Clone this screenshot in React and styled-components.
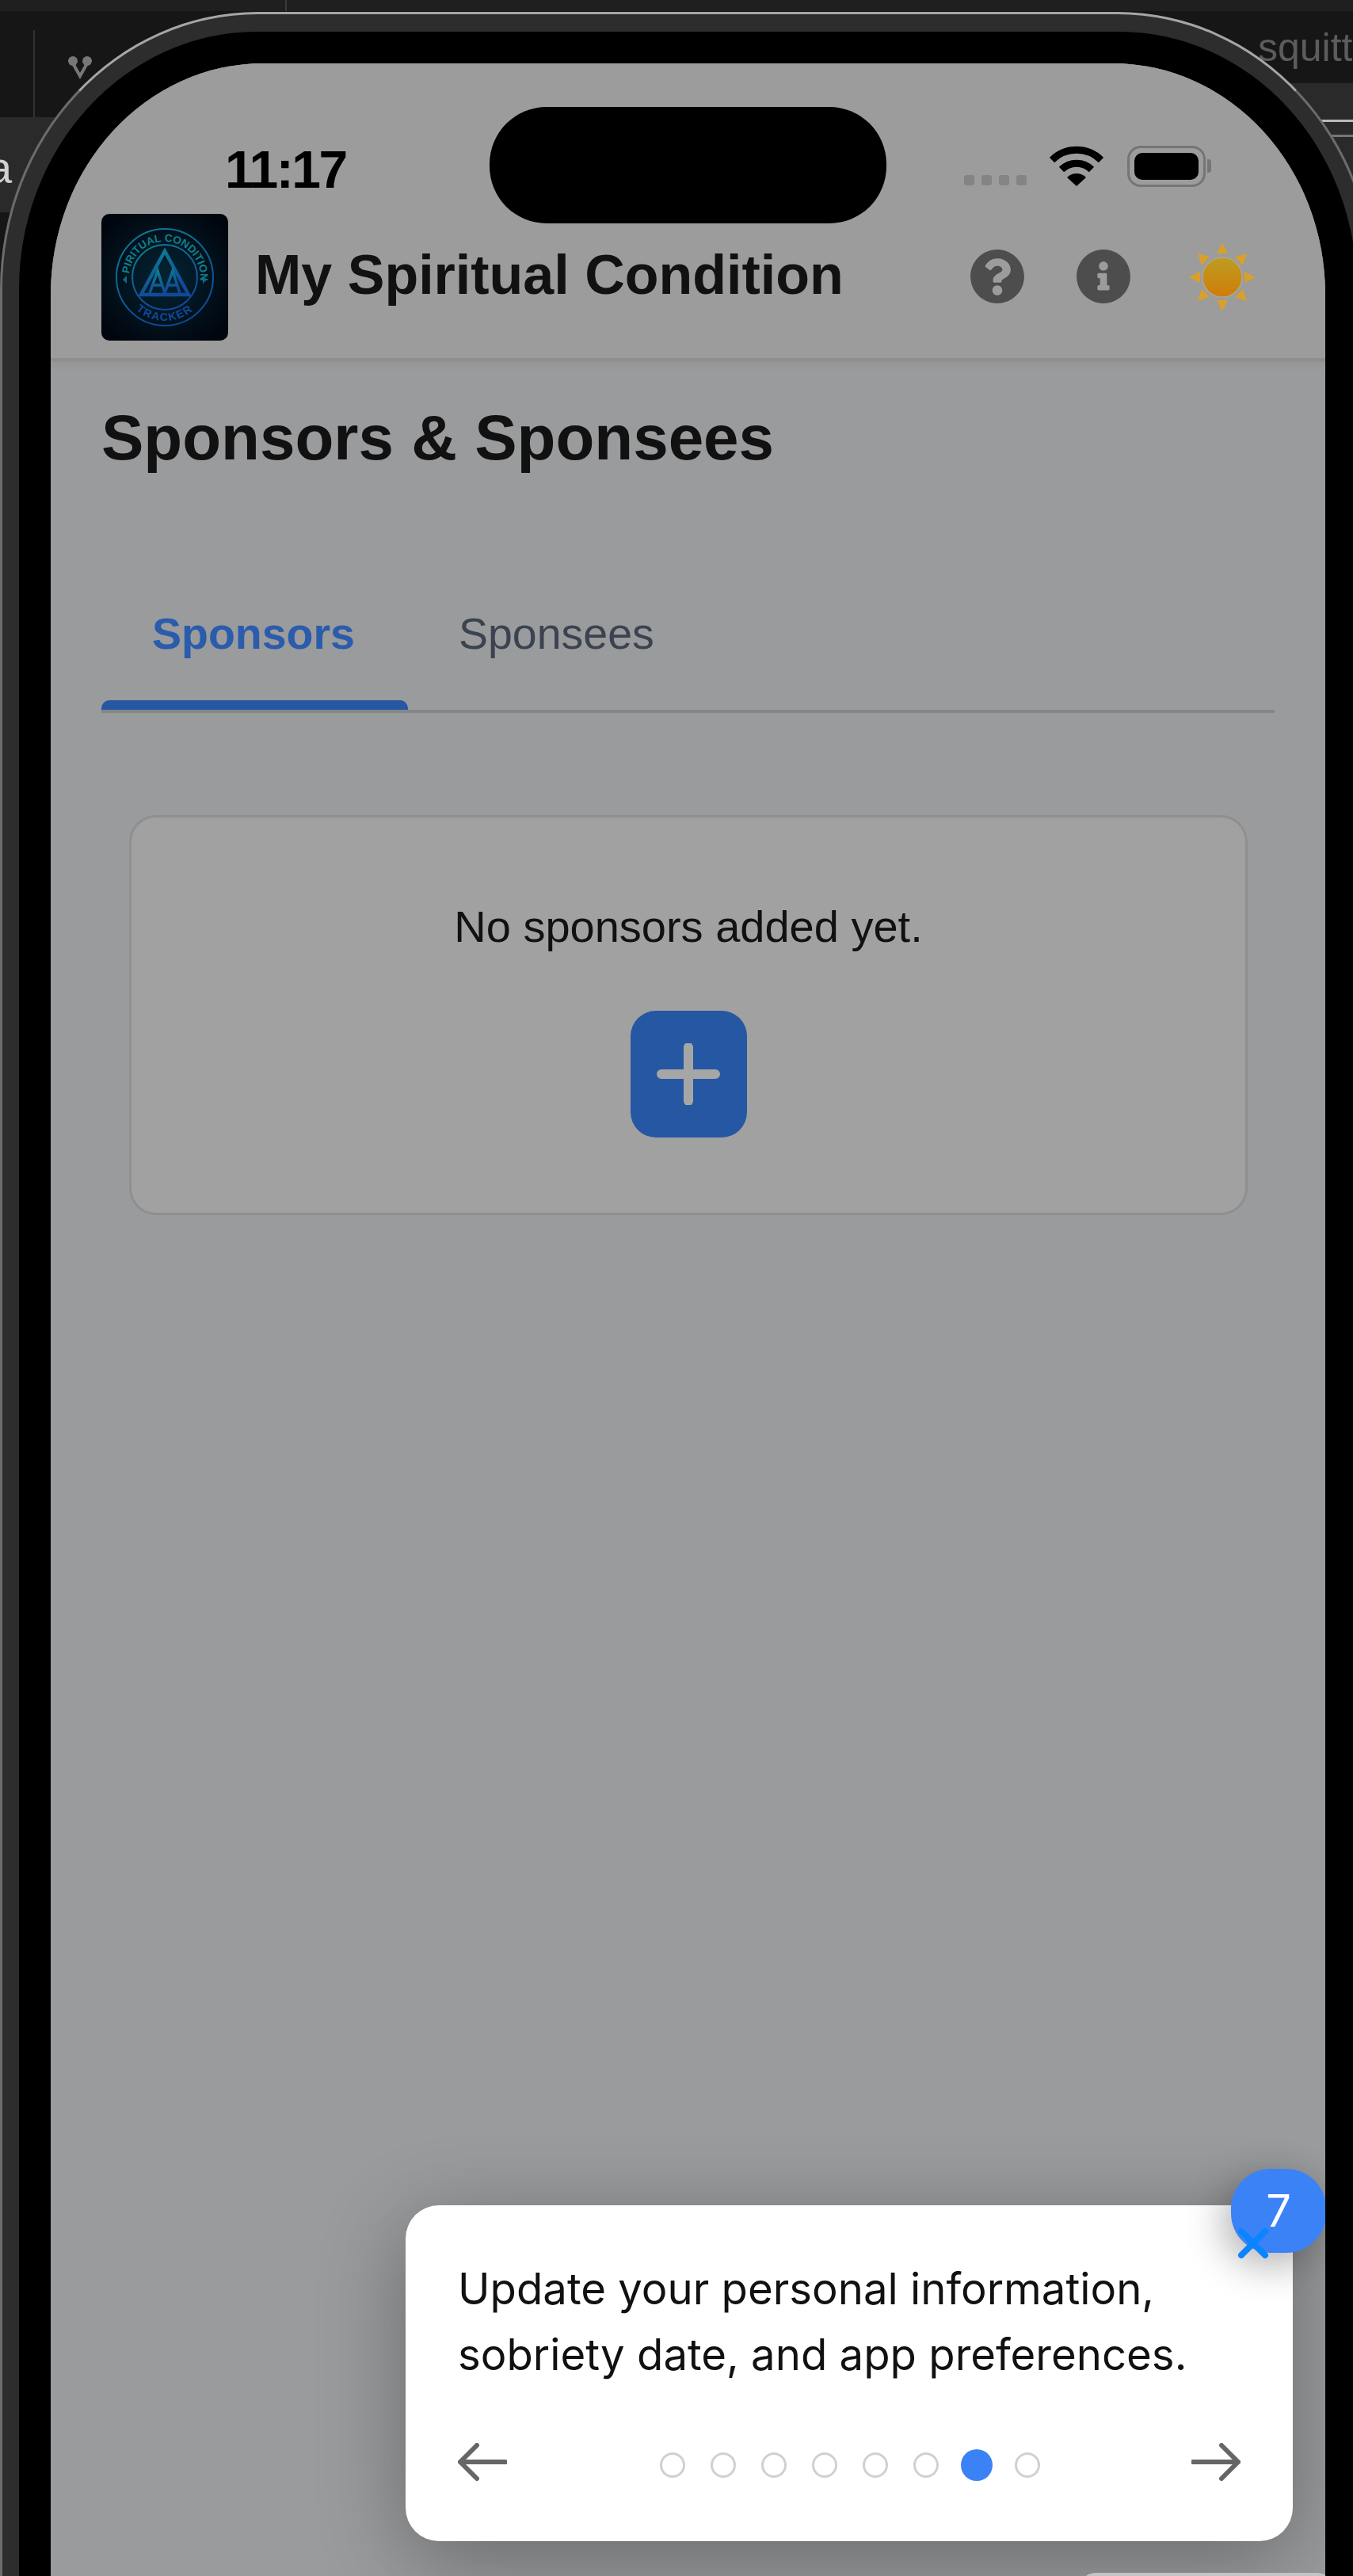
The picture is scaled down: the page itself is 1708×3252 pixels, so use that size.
import React from 'react';
import styled, { createGlobalStyle } from 'styled-components';
import { FaQuestionCircle, FaInfoCircle } from 'react-icons/fa';

const GlobalStyle = createGlobalStyle`
  html, body {
    margin: 0;
    padding: 0;
    background: #161616;
  }
  * {
    box-sizing: border-box;
  }
`

const Desktop = styled.div`
  position: relative;
  width: 1708px;
  height: 3252px;
  overflow: hidden;
  background: #161616;
  font-family: "Liberation Sans", Arial, sans-serif;
`

// bits of the window behind the phone
const BackBand = styled.div`
  position: absolute;
  left: ${p => p.$left}px;
  top: ${p => p.$top}px;
  width: ${p => p.$width}px;
  height: ${p => p.$height}px;
  background: ${p => p.$color};
`

const BackText = styled.span`
  position: absolute;
  left: ${p => p.$left}px;
  top: ${p => p.$top}px;
  font-size: ${p => p.$size}px;
  line-height: 64px;
  color: ${p => p.$color};
`

const BackIcon = styled.svg`
  position: absolute;
  left: 84px;
  top: 70px;
`

const PhoneShell = styled.div`
  position: relative;
  width: 1736px;
  margin-top: 15px;
  height: 3300px;
  padding: 22px 20px 0 21px;
  background: #2d2d2d;
  border: 3px solid #6c6c6c;
  border-top-color: #a6a6a6;
  border-radius: 325px 325px 0 0 / 350px 350px 0 0;
`

const PhoneGlass = styled.div`
  height: 100%;
  padding: 40px 40px 0;
  background: #000;
  border-radius: 300px 300px 0 0 / 325px 325px 0 0;
`

const Screen = styled.div`
  position: relative;
  height: 100%;
  overflow: hidden;
  background: #9a9b9d;
  border-radius: 268px 268px 0 0 / 292px 292px 0 0;
`

const Island = styled.div`
  position: absolute;
  left: 554px;
  top: 55px;
  width: 501px;
  height: 147px;
  background: #000;
  border-radius: 72px;
`

const TopArea = styled.header`
  background: #9c9c9c;
  border-bottom: 4px solid #8e8e8e;
  box-shadow: 0 4px 10px rgba(0, 0, 0, 0.06);
`

const StatusBar = styled.div`
  display: flex;
  align-items: flex-start;
  height: 190px;
  padding: 96px 151px 0 220px;
`

const Clock = styled.span`
  font-size: 66px;
  font-weight: 700;
  line-height: 76px;
  letter-spacing: -2.5px;
  color: #000;
`

const StatusIcons = styled.div`
  display: flex;
  align-items: flex-start;
  margin-left: auto;
  margin-top: 8px;
`

const SignalDots = styled.div`
  display: flex;
  gap: 9px;
  margin-top: 37px;
  margin-right: 29px;
`

const SignalDot = styled.span`
  width: 13px;
  height: 13px;
  border-radius: 3px;
  background: #848484;
`

const WifiGlyph = styled.svg`
  margin-right: 30px;
`

const Battery = styled.div`
  position: relative;
  width: 99px;
  height: 52px;
  padding: 6px;
  border: 3px solid #757575;
  border-radius: 17px;

  &::before {
    content: '';
    display: block;
    height: 100%;
    background: #000;
    border-radius: 10px;
  }

  &::after {
    content: '';
    position: absolute;
    right: -10px;
    top: 14px;
    width: 5px;
    height: 17px;
    background: #757575;
    border-radius: 0 4px 4px 0;
  }
`

const AppBar = styled.div`
  display: flex;
  align-items: center;
  height: 182px;
  padding: 0 88px 22px 64px;
`

const LogoBox = styled.svg`
  flex: none;
  width: 160px;
  height: 160px;
  border-radius: 10px;
`

const AppTitle = styled.h1`
  margin: 0 0 6px 34px;
  font-size: 70px;
  font-weight: 700;
  line-height: 80px;
  color: #111;
`

const AppActions = styled.div`
  display: flex;
  align-items: center;
  margin-left: auto;
  color: #4d4d4d;
`

const RoundAction = styled.span`
  display: flex;
  margin-right: ${p => p.$gap}px;
  margin-bottom: 2px;
`

const Page = styled.main`
  padding: 0 64px;
`

const PageTitle = styled.h2`
  margin: 0;
  padding-top: 51px;
  font-size: 80px;
  font-weight: 700;
  line-height: 92px;
  color: #111;
`

const TabRow = styled.div`
  display: flex;
  align-items: flex-end;
  height: 301px;
  border-bottom: 4px solid #858688;
`

const Tab = styled.div`
  position: relative;
  display: flex;
  align-items: center;
  height: 137px;
  padding: 0 ${p => (p.$active ? '67px' : '64px')} 56px 64px;
  font-size: 55.5px;
  font-weight: ${p => (p.$active ? 700 : 400)};
  color: ${p => (p.$active ? '#2b5cab' : '#3b4350')};

  &::after {
    content: '';
    display: ${p => (p.$active ? 'block' : 'none')};
    position: absolute;
    left: 0;
    right: 0;
    bottom: 0;
    height: 12px;
    background: #2557a3;
    border-radius: 10px 10px 0 0;
  }
`

const EmptyCard = styled.section`
  display: flex;
  flex-direction: column;
  align-items: center;
  height: 505px;
  margin: 129px 34px 0 35px;
  padding-top: 106px;
  background: #a1a1a1;
  border: 3px solid #8f8f8f;
  border-radius: 34px;
`

const EmptyText = styled.p`
  margin: 0;
  font-size: 56px;
  line-height: 64px;
  color: #111;
`

const AddButton = styled.div`
  display: flex;
  align-items: center;
  justify-content: center;
  width: 147px;
  height: 160px;
  margin-top: 74px;
  background: #2557a3;
  border-radius: 32px;
`

const Coach = styled.aside`
  position: absolute;
  left: 448px;
  top: 2704px;
  width: 1120px;
  height: 424px;
  padding: 64px 66px 0;
  background: #fff;
  border-radius: 42px;
  box-shadow: 0 24px 110px rgba(0, 0, 0, 0.32);
`

const CoachText = styled.p`
  margin: 0;
  font-family: Inter, "Liberation Sans", sans-serif;
  font-size: 54.5px;
  line-height: 83px;
  color: #111;
`

const CoachNav = styled.div`
  display: flex;
  align-items: center;
  justify-content: space-between;
  margin-top: 70px;
`

const DotRow = styled.div`
  display: flex;
  align-items: center;
  gap: 32px;
  margin-top: 8px;
  margin-left: 2px;
`

const StepDot = styled.span`
  width: ${p => (p.$active ? 40 : 32)}px;
  height: ${p => (p.$active ? 40 : 32)}px;
  margin: 0 ${p => (p.$active ? -4 : 0)}px;
  border-radius: 50%;
  background: ${p => (p.$active ? '#3b82f6' : 'transparent')};
  border: ${p => (p.$active ? 'none' : '3px solid #d0d0d0')};
`

const StepBadge = styled.div`
  position: absolute;
  left: 1042px;
  top: -46px;
  display: flex;
  align-items: center;
  justify-content: center;
  width: 120px;
  height: 106px;
  background: #3b82f6;
  border-radius: 50px;
  color: #fff;
  font-family: Inter, "Liberation Sans", sans-serif;
  font-size: 56px;
  box-shadow: -8px 14px 50px rgba(0, 0, 0, 0.32);
`

const CloseMark = styled.svg`
  position: absolute;
  left: 1050px;
  top: 28px;
`

const HomeBarHint = styled.div`
  position: absolute;
  left: 1299px;
  top: 3168px;
  width: 320px;
  height: 30px;
  background: #c4c4c4;
  border-radius: 20px 20px 0 0;
`

const Logo = () => (
  <LogoBox viewBox="0 0 160 160">
    <defs>
      <radialGradient id="logoBg" cx="50%" cy="50%" r="60%">
        <stop offset="0%" stopColor="#042434" />
        <stop offset="100%" stopColor="#01060e" />
      </radialGradient>
      <linearGradient id="logoInk" x1="0" y1="0" x2="0.4" y2="1">
        <stop offset="0%" stopColor="#0f7f8e" />
        <stop offset="100%" stopColor="#0f4a9a" />
      </linearGradient>
      <path id="logoTop" d="M35 80a45 45 0 0 1 90 0" />
      <path id="logoBottom" d="M25 80a55 55 0 0 0 110 0" />
    </defs>
    <rect width="160" height="160" fill="url(#logoBg)" />
    <g fill="none" stroke="url(#logoInk)">
      <circle cx="80" cy="80" r="61" strokeWidth="2" />
      <circle cx="80" cy="80" r="41" strokeWidth="2" />
      <path d="M80 47 L110 102 H50 Z" strokeWidth="4.5" />
      <path d="M61 100 L71 72 L80 100 M80 100 L90 72 L99 100 M65 90 H77 M84 90 H96" strokeWidth="3.5" />
    </g>
    <text fontFamily="Liberation Sans" fontSize="13.5" fontWeight="700" fill="#0f7f8e">
      <textPath href="#logoTop" startOffset="50%" textAnchor="middle">SPIRITUAL CONDITION</textPath>
    </text>
    <text fontFamily="Liberation Sans" fontSize="14" fontWeight="700" fill="#0f4a9a" letterSpacing="1.5">
      <textPath href="#logoBottom" startOffset="50%" textAnchor="middle">TRACKER</textPath>
    </text>
    <path d="M27 83l5-5v10z M133 83l-5-5v10z" fill="#0d6a8c" />
  </LogoBox>
);

const Wifi = () => (
  <WifiGlyph width="68" height="52" viewBox="0 0 68 52">
    <path d="M3 18a44 44 0 0 1 62 0" fill="none" stroke="#000" strokeWidth="9" />
    <path d="M15 30a27 27 0 0 1 38 0" fill="none" stroke="#000" strokeWidth="9" />
    <path d="M34 51L22 40a17 17 0 0 1 24 0z" fill="#000" />
  </WifiGlyph>
);

const Sun = () => (
  <svg width="84" height="86" viewBox="0 0 84 86">
    <defs>
      <linearGradient id="sunCore" x1="0" y1="0" x2="0" y2="1">
        <stop offset="0%" stopColor="#bd9d22" />
        <stop offset="100%" stopColor="#d07c08" />
      </linearGradient>
    </defs>
    <g fill="#d9a02a">
      <path d="M42 0l7 13H35z" />
      <path d="M42 86l-7-14h14z" />
      <path d="M0 43l14-7v14z" />
      <path d="M84 43l-14-7v14z" />
      <path d="M11 13l15 4-10 11z" />
      <path d="M73 13l-15 4 10 11z" />
      <path d="M11 73l5-15 10 10z" />
      <path d="M73 73l-5-15-10 10z" />
    </g>
    <circle cx="42" cy="43" r="25" fill="url(#sunCore)" stroke="#b0a68c" strokeWidth="1.5" />
  </svg>
);

const Arrow = ({ flip }) => (
  <svg width="62" height="48" viewBox="0 0 62 48">
    <path
      d={flip ? 'M2 24H59M38 3L59 24L38 45' : 'M60 24H3M24 3L3 24L24 45'}
      fill="none"
      stroke="#666"
      strokeWidth="6"
      strokeLinecap="round"
      strokeLinejoin="round"
    />
  </svg>
);

const steps = [0, 1, 2, 3, 4, 5, 6, 7];

const App = () => {
  return (
    <Desktop>
      <GlobalStyle />
      <BackBand $left={0} $top={0} $width={1708} $height={14} $color="#1f1f1f" />
      <BackBand $left={360} $top={0} $width={2} $height={14} $color="#3a3a3a" />
      <BackBand $left={42} $top={38} $width={2} $height={110} $color="#333" />
      <BackBand $left={0} $top={148} $width={70} $height={120} $color="#2a2a2a" />
      <BackBand $left={1600} $top={105} $width={108} $height={200} $color="#2a2a2a" />
      <BackBand $left={1600} $top={151} $width={108} $height={3} $color="#bbb" />
      <BackBand $left={1600} $top={170} $width={108} $height={3} $color="#777" />
      <BackIcon width="44" height="30" viewBox="0 0 44 30">
        <circle cx="8" cy="7" r="6" fill="#777" />
        <circle cx="26" cy="7" r="6" fill="#777" />
        <path d="M8 10l9 16 9-16" fill="none" stroke="#777" strokeWidth="4" />
      </BackIcon>
      <BackText $left={-16} $top={180} $size={56} $color="#d0d0d0">a</BackText>
      <BackText $left={1588} $top={28} $size={50} $color="#5c5c5c">squitt</BackText>

      <PhoneShell>
        <PhoneGlass>
          <Screen>
            <TopArea>
              <StatusBar>
                <Clock>11:17</Clock>
                <StatusIcons>
                  <SignalDots>
                    <SignalDot />
                    <SignalDot />
                    <SignalDot />
                    <SignalDot />
                  </SignalDots>
                  <Wifi />
                  <Battery />
                </StatusIcons>
              </StatusBar>
              <AppBar>
                <Logo />
                <AppTitle>My Spiritual Condition</AppTitle>
                <AppActions>
                  <RoundAction $gap={64}><FaQuestionCircle size={70} /></RoundAction>
                  <RoundAction $gap={73}><FaInfoCircle size={70} /></RoundAction>
                  <Sun />
                </AppActions>
              </AppBar>
            </TopArea>

            <Page>
              <PageTitle>Sponsors &amp; Sponsees</PageTitle>
              <TabRow>
                <Tab $active>Sponsors</Tab>
                <Tab>Sponsees</Tab>
              </TabRow>
              <EmptyCard>
                <EmptyText>No sponsors added yet.</EmptyText>
                <AddButton>
                  <svg width="80" height="78" viewBox="0 0 80 78">
                    <path d="M40 5V73M6 39H74" stroke="#a6a6a6" strokeWidth="12" strokeLinecap="round" />
                  </svg>
                </AddButton>
              </EmptyCard>
            </Page>

            <Island />

            <Coach>
              <CoachText>
                Update your personal information,
                <br />
                sobriety date, and app preferences.
              </CoachText>
              <CoachNav>
                <Arrow />
                <DotRow>
                  {steps.map(n => <StepDot key={n} $active={n === 6} />)}
                </DotRow>
                <Arrow flip />
              </CoachNav>
              <StepBadge>7</StepBadge>
              <CloseMark width="40" height="40" viewBox="0 0 40 40">
                <path d="M5 5L35 35M35 5L5 35" stroke="#0a84ff" strokeWidth="8" strokeLinecap="round" />
              </CloseMark>
            </Coach>

            <HomeBarHint />
          </Screen>
        </PhoneGlass>
      </PhoneShell>
    </Desktop>
  );
}

export default App;
